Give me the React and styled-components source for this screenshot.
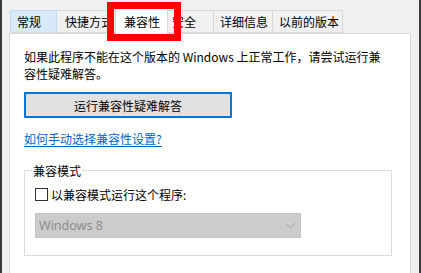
import React from "react";
import styled, { createGlobalStyle } from "styled-components";

const Global = createGlobalStyle`
  html, body { margin: 0; padding: 0; background: #f0f0f0; }
  body { font-family: "Noto Sans CJK SC", "Noto Sans", sans-serif; font-size: 12px; color: #000; }
`;

const Window = styled.div`
  position: relative;
  box-sizing: border-box;
  width: 421px;
  height: 273px;
  overflow: hidden;
  background: #f0f0f0;
  border-left: 2px solid #3a3a3a;
  border-right: 2px solid #3a3a3a;
  padding: 8px 0 0 7px;
`;

const TabRow = styled.div`
  display: flex;
  align-items: flex-end;
  height: 26px;
  margin-left: 1px;
  position: relative;
  z-index: 1;
  margin-bottom: -1px;
`;

const Tab = styled.div`
  box-sizing: border-box;
  width: ${(p) => p.$w}px;
  height: ${(p) => (p.$active ? 26 : 23)}px;
  padding-left: ${(p) => p.$pl}px;
  display: flex;
  align-items: center;
  white-space: nowrap;
  line-height: 17px;
  background: ${(p) => (p.$active ? "#ffffff" : p.$hover ? "#d8eaf9" : "#f0f0f0")};
  border: 1px solid ${(p) => (p.$hover ? "#c3dbf1" : "#d9d9d9")};
  border-bottom: ${(p) => (p.$active ? "none" : "1px solid #d9d9d9")};
  border-left-width: ${(p) => (p.$first || p.$active || p.$hover ? 1 : 0)}px;
  border-right-width: ${(p) => (p.$beforeActive ? 0 : 1)}px;
  margin-bottom: ${(p) => (p.$active ? 0 : 1)}px;
`;

const Panel = styled.div`
  box-sizing: border-box;
  width: 402px;
  height: 260px;
  background: #ffffff;
  border: 1px solid #d9d9d9;
  padding: 14px 0 0 14px;
`;

const Para = styled.p`
  margin: 0;
  line-height: 17px;
  white-space: nowrap;
`;

const Button = styled.div`
  box-sizing: border-box;
  margin-top: 10px;
  width: 208px;
  height: 26px;
  border: 2px solid #0078d7;
  background: #e1e1e1;
  display: flex;
  align-items: center;
  justify-content: center;
  line-height: 17px;
`;

const Link = styled.a`
  display: block;
  margin-top: 12px;
  line-height: 17px;
  color: #0066cc;
  text-decoration: underline;
  text-underline-offset: 2px;
`;

const Group = styled.fieldset`
  box-sizing: border-box;
  width: 368px;
  margin: 15px 0 0 0;
  padding: 0 10px 17px 10px;
  border: 1px solid #dcdcdc;
  min-width: 0;
`;

const Legend = styled.legend`
  padding: 0 1px;
  margin-left: -3px;
  line-height: 17px;
`;

const CheckRow = styled.div`
  display: flex;
  align-items: center;
  margin-top: 7px;
  line-height: 17px;
`;

const Box = styled.span`
  box-sizing: border-box;
  width: 13px;
  height: 13px;
  border: 1px solid #333333;
  background: #fff;
  margin-right: 3px;
`;

const Select = styled.div`
  box-sizing: border-box;
  margin-top: 10px;
  width: 266px;
  height: 25px;
  background: #cccccc;
  border: 1px solid #c4c4c4;
  display: flex;
  align-items: center;
  justify-content: space-between;
  padding: 0 4px 0 3px;
  color: #8c8c8c;
  font-family: "Noto Sans", "Noto Sans CJK SC", sans-serif;
  font-size: 12.5px;
`;

const Highlight = styled.div`
  position: absolute;
  left: 105px;
  top: 2px;
  width: 74px;
  height: 39px;
  box-sizing: border-box;
  border: 7px solid #ff0000;
  z-index: 5;
  pointer-events: none;
`;

const tabs = [
  { label: "常规", w: 47, pl: 6, hover: true, first: true },
  { label: "快捷方式", w: 58, pl: 8, beforeActive: true },
  { label: "兼容性", w: 53, pl: 8, active: true },
  { label: "安全", w: 46, pl: 4 },
  { label: "详细信息", w: 59, pl: 6 },
  { label: "以前的版本", w: 70, pl: 6 },
];

export default function App() {
  return (
    <>
      <Global />
      <Window>
        <TabRow>
          {tabs.map((t) => (
            <Tab
              key={t.label}
              $w={t.w}
              $pl={t.pl}
              $active={t.active}
              $hover={t.hover}
              $first={t.first}
              $beforeActive={t.beforeActive}
            >
              {t.label}
            </Tab>
          ))}
        </TabRow>
        <Panel>
          <Para>
            如果此程序不能在这个版本的 Windows 上正常工作，请尝试运行兼
            <br />
            容性疑难解答。
          </Para>
          <Button>运行兼容性疑难解答</Button>
          <Link>如何手动选择兼容性设置?</Link>
          <Group>
            <Legend>兼容模式</Legend>
            <CheckRow>
              <Box />
              以兼容模式运行这个程序:
            </CheckRow>
            <Select>
              <span>Windows 8</span>
              <svg width="11" height="7" viewBox="0 0 11 7">
                <path d="M0.5 0.8 L5.5 5.8 L10.5 0.8" fill="none" stroke="#a8a8a8" strokeWidth="1" />
              </svg>
            </Select>
          </Group>
        </Panel>
        <Highlight />
      </Window>
    </>
  );
}
